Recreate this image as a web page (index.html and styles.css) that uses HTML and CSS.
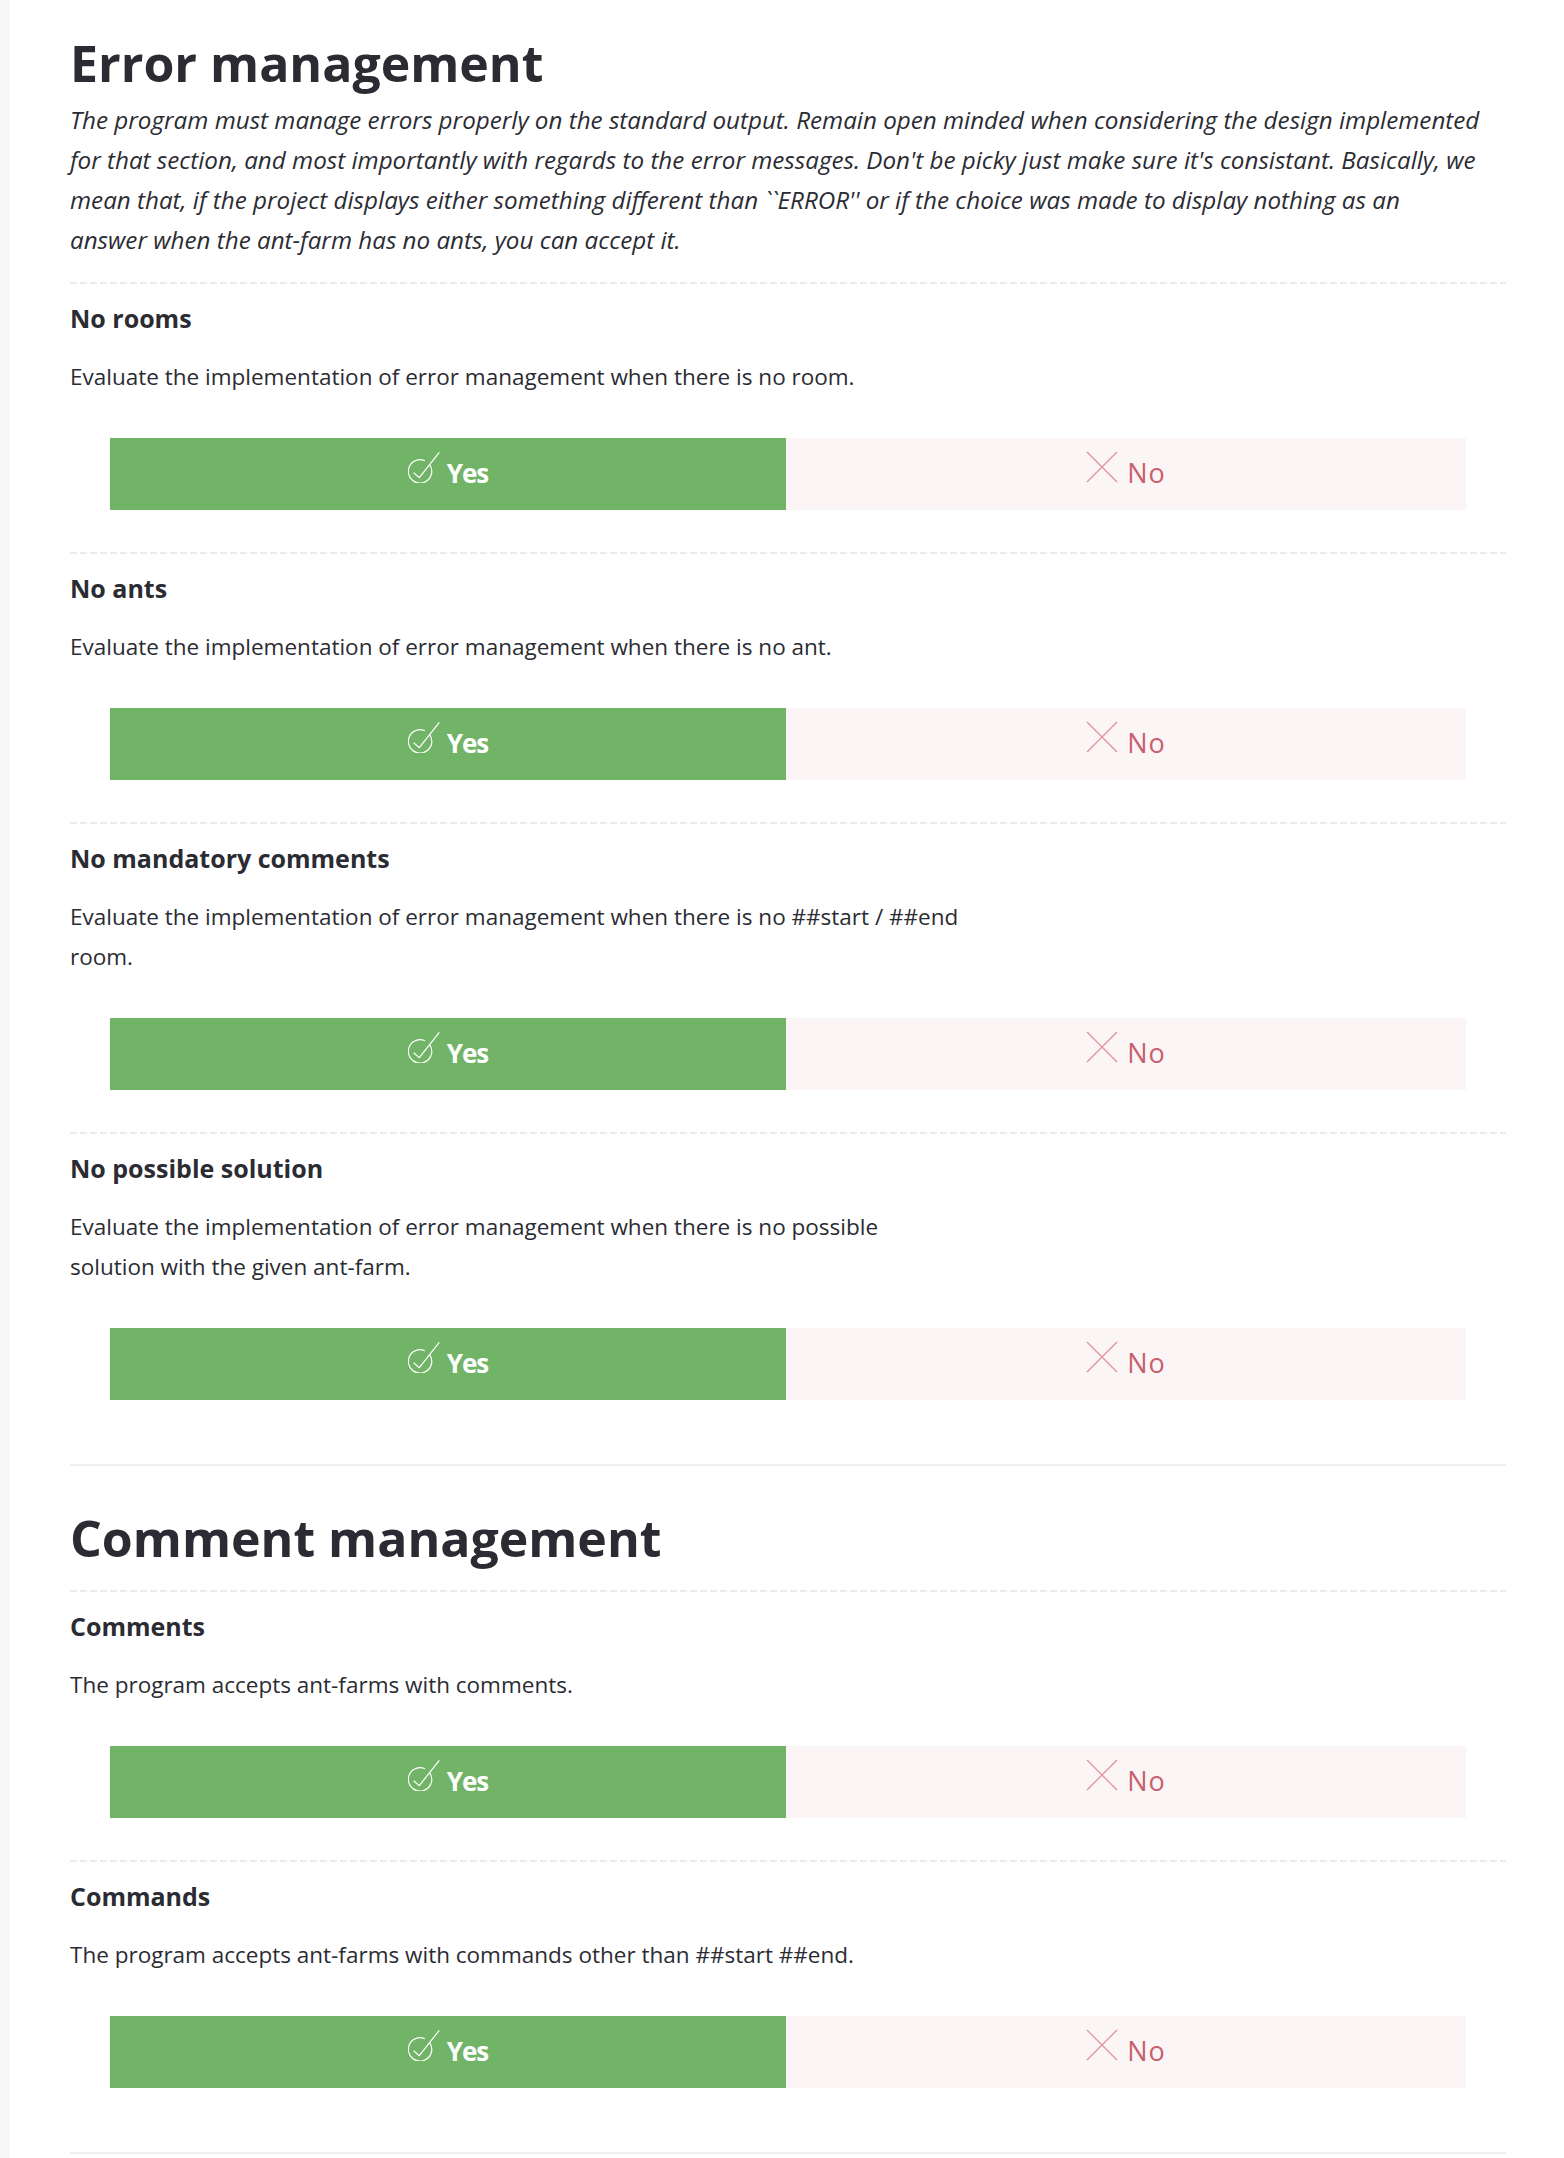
FILE: index.html
```html
<!DOCTYPE html>
<html lang="en">
<head>
<meta charset="utf-8">
<title>Evaluation</title>
<link rel="stylesheet" href="styles.css">
</head>
<body>
<div class="page">
  <aside class="rail"></aside>
  <main class="content">
    <section class="group">
      <h2 class="group-title">Error management</h2>
      <p class="group-intro">The program must manage errors properly on the standard output. Remain open minded when considering the design implemented<br>for that section, and most importantly with regards to the error messages. Don't be picky just make sure it's consistant. Basically, we<br>mean that, if the project displays either something different than ``ERROR'' or if the choice was made to display nothing as an<br>answer when the ant-farm has no ants, you can accept it.</p>

      <div class="item">
        <h3 class="item-title">No rooms</h3>
        <p class="item-desc">Evaluate the implementation of error management when there is no room.</p>
        <div class="choice">
          <button class="btn btn-yes"><svg class="ico" viewBox="0 0 32 32" width="32" height="32"><path d="M21.4 13.3 A11.7 11.7 0 1 1 16.9 9.7" fill="none" stroke="#fff" stroke-width="1.2"/><path d="M5.6 21.8 L11.3 26.6 L31.3 1.3" fill="none" stroke="#fff" stroke-width="1.2"/></svg><span>Yes</span></button>
          <button class="btn btn-no"><svg class="ico" viewBox="0 0 32 32" width="32" height="32"><path d="M1 1 L31 31 M31 1 L1 31" stroke="#e0919a" stroke-width="1.3"/></svg><span>No</span></button>
        </div>
      </div>

      <div class="item">
        <h3 class="item-title">No ants</h3>
        <p class="item-desc">Evaluate the implementation of error management when there is no ant.</p>
        <div class="choice">
          <button class="btn btn-yes"><svg class="ico" viewBox="0 0 32 32" width="32" height="32"><path d="M21.4 13.3 A11.7 11.7 0 1 1 16.9 9.7" fill="none" stroke="#fff" stroke-width="1.2"/><path d="M5.6 21.8 L11.3 26.6 L31.3 1.3" fill="none" stroke="#fff" stroke-width="1.2"/></svg><span>Yes</span></button>
          <button class="btn btn-no"><svg class="ico" viewBox="0 0 32 32" width="32" height="32"><path d="M1 1 L31 31 M31 1 L1 31" stroke="#e0919a" stroke-width="1.3"/></svg><span>No</span></button>
        </div>
      </div>

      <div class="item">
        <h3 class="item-title">No mandatory comments</h3>
        <p class="item-desc">Evaluate the implementation of error management when there is no ##start / ##end<br>room.</p>
        <div class="choice">
          <button class="btn btn-yes"><svg class="ico" viewBox="0 0 32 32" width="32" height="32"><path d="M21.4 13.3 A11.7 11.7 0 1 1 16.9 9.7" fill="none" stroke="#fff" stroke-width="1.2"/><path d="M5.6 21.8 L11.3 26.6 L31.3 1.3" fill="none" stroke="#fff" stroke-width="1.2"/></svg><span>Yes</span></button>
          <button class="btn btn-no"><svg class="ico" viewBox="0 0 32 32" width="32" height="32"><path d="M1 1 L31 31 M31 1 L1 31" stroke="#e0919a" stroke-width="1.3"/></svg><span>No</span></button>
        </div>
      </div>

      <div class="item">
        <h3 class="item-title">No possible solution</h3>
        <p class="item-desc">Evaluate the implementation of error management when there is no possible<br>solution with the given ant-farm.</p>
        <div class="choice">
          <button class="btn btn-yes"><svg class="ico" viewBox="0 0 32 32" width="32" height="32"><path d="M21.4 13.3 A11.7 11.7 0 1 1 16.9 9.7" fill="none" stroke="#fff" stroke-width="1.2"/><path d="M5.6 21.8 L11.3 26.6 L31.3 1.3" fill="none" stroke="#fff" stroke-width="1.2"/></svg><span>Yes</span></button>
          <button class="btn btn-no"><svg class="ico" viewBox="0 0 32 32" width="32" height="32"><path d="M1 1 L31 31 M31 1 L1 31" stroke="#e0919a" stroke-width="1.3"/></svg><span>No</span></button>
        </div>
      </div>
    </section>

    <section class="group">
      <h2 class="group-title">Comment management</h2>

      <div class="item">
        <h3 class="item-title">Comments</h3>
        <p class="item-desc">The program accepts ant-farms with comments.</p>
        <div class="choice">
          <button class="btn btn-yes"><svg class="ico" viewBox="0 0 32 32" width="32" height="32"><path d="M21.4 13.3 A11.7 11.7 0 1 1 16.9 9.7" fill="none" stroke="#fff" stroke-width="1.2"/><path d="M5.6 21.8 L11.3 26.6 L31.3 1.3" fill="none" stroke="#fff" stroke-width="1.2"/></svg><span>Yes</span></button>
          <button class="btn btn-no"><svg class="ico" viewBox="0 0 32 32" width="32" height="32"><path d="M1 1 L31 31 M31 1 L1 31" stroke="#e0919a" stroke-width="1.3"/></svg><span>No</span></button>
        </div>
      </div>

      <div class="item">
        <h3 class="item-title">Commands</h3>
        <p class="item-desc">The program accepts ant-farms with commands other than ##start ##end.</p>
        <div class="choice">
          <button class="btn btn-yes"><svg class="ico" viewBox="0 0 32 32" width="32" height="32"><path d="M21.4 13.3 A11.7 11.7 0 1 1 16.9 9.7" fill="none" stroke="#fff" stroke-width="1.2"/><path d="M5.6 21.8 L11.3 26.6 L31.3 1.3" fill="none" stroke="#fff" stroke-width="1.2"/></svg><span>Yes</span></button>
          <button class="btn btn-no"><svg class="ico" viewBox="0 0 32 32" width="32" height="32"><path d="M1 1 L31 31 M31 1 L1 31" stroke="#e0919a" stroke-width="1.3"/></svg><span>No</span></button>
        </div>
      </div>
    </section>
  </main>
</div>
</body>
</html>
```

FILE: styles.css
```css
* { box-sizing: border-box; }
html, body { margin: 0; padding: 0; background: #fff; }
body { font-family: "Open Sans", "Noto Sans", sans-serif; color: #2b2c33; }

.page { display: flex; min-height: 100vh; }
.rail { flex: none; width: 10px; background: #f7f7f7; }
.content { flex: 1; padding: 0 58px 0 60px; }

.group { padding: 42px 0 22px; border-bottom: 2px solid #eeeeee; }
.group:first-child { padding-top: 33px; }

.group-title {
  margin: 0 0 22px;
  font-size: 50px;
  line-height: 60px;
  font-weight: 700;
  color: #2b2c33;
}
.group-intro {
  margin: -15px 0 22px;
  font-size: 24.2px;
  line-height: 40px;
  font-style: italic;
}

.item {
  padding: 21px 0 42px;
  background-image: linear-gradient(to right, #ebebeb 0 7px, transparent 7px 10px);
  background-size: 10px 2px;
  background-repeat: repeat-x;
  background-position: 0 0;
}
.item-title {
  margin: 0;
  font-size: 25px;
  line-height: 30px;
  font-weight: 700;
}
.item-desc {
  margin: 24px 0 41px;
  font-size: 22.5px;
  line-height: 40px;
}

.choice {
  display: grid;
  grid-template-columns: 676px 1fr;
  margin: 0 40px;
  height: 72px;
}
.btn {
  display: flex;
  flex-wrap: wrap;
  align-items: baseline;
  align-content: center;
  justify-content: center;
  border: 0;
  margin: 0;
  padding: 0 0 11px;
  font-family: inherit;
  line-height: 1;
  cursor: pointer;
}
.btn-yes {
  background: #72b467;
  color: #fff;
  font-size: 26px;
  font-weight: 700;
  letter-spacing: -1px;
  gap: 7px;
}
.btn-no {
  background: #fcf5f5;
  color: #c95f6e;
  font-size: 27px;
  font-weight: 400;
  letter-spacing: 1px;
  gap: 9px;
}
.ico { display: block; flex: none; }
```
